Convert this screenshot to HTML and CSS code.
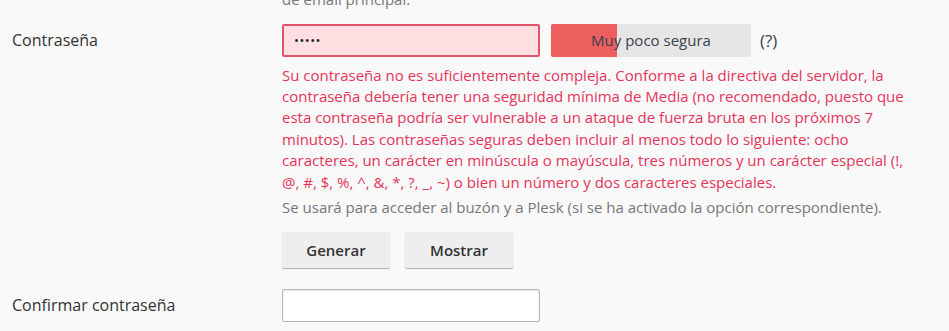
FILE: index.html
```html
<!DOCTYPE html>
<html lang="es">
<head>
<meta charset="utf-8">
<title>Contraseña</title>
<link rel="stylesheet" href="styles.css">
</head>
<body>
<div class="form">
  <div class="row top-row">
    <div class="label"></div>
    <div class="field">
      <div class="hint top-hint">de email principal.</div>
    </div>
  </div>
  <div class="row pwd-row">
    <div class="label">Contraseña</div>
    <div class="field">
      <div class="input-line">
        <div class="input error">•••••</div>
        <div class="strength">
          <div class="strength-fill"></div>
          <span class="strength-text">Muy poco segura</span>
        </div>
        <span class="help">(?)</span>
      </div>
      <div class="error-text">Su contraseña no es suficientemente compleja. Conforme a la directiva del servidor, la contraseña debería tener una seguridad mínima de Media (no recomendado, puesto que esta contraseña podría ser vulnerable a un ataque de fuerza bruta en los próximos 7 minutos). Las contraseñas seguras deben incluir al menos todo lo siguiente: ocho caracteres, un carácter en minúscula o mayúscula, tres números y un carácter especial (!, @, #, $, %, ^, &amp;, *, ?, _, ~) o bien un número y dos caracteres especiales.</div>
      <div class="hint">Se usará para acceder al buzón y a Plesk (si se ha activado la opción correspondiente).</div>
      <div class="buttons">
        <button class="btn">Generar</button>
        <button class="btn">Mostrar</button>
      </div>
    </div>
  </div>
  <div class="row confirm-row">
    <div class="label">Confirmar contraseña</div>
    <div class="field">
      <div class="input"></div>
    </div>
  </div>
</div>
</body>
</html>
```
FILE: styles.css
```css
html, body {
  margin: 0;
  padding: 0;
  background: #f9f9f9;
  overflow: hidden;
}
body {
  font-family: "Open Sans", "DejaVu Sans", sans-serif;
  font-size: 15px;
  line-height: 21.4px;
  color: #333;
}
.form {
  padding-left: 12px;
}
.row {
  display: flex;
}
.label {
  width: 270px;
  flex: none;
  font-size: 16px;
  line-height: 33px;
  color: #333;
}
.field {
  width: 630px;
}
.top-row .label,
.top-hint {
  line-height: 18px;
}
.top-hint {
  margin-top: -10px;
}
.pwd-row {
  margin-top: 16px;
}
.input-line {
  display: flex;
  align-items: center;
}
.input {
  box-sizing: border-box;
  width: 258px;
  height: 33px;
  border: 1px solid #b5b5b5;
  border-radius: 2px;
  background: #fff;
  box-shadow: inset 0 1px 2px rgba(0,0,0,0.12);
}
.input.error {
  border: 2px solid #e0556a;
  background: #ffdfe1;
  padding-left: 10px;
  font-size: 13px;
  line-height: 29px;
  color: #222;
  letter-spacing: 0.5px;
  box-shadow: none;
}
.strength {
  position: relative;
  margin-left: 11px;
  width: 200px;
  height: 33px;
  background: #e6e6e6;
  border-radius: 2px;
  overflow: hidden;
  display: flex;
  align-items: center;
  justify-content: center;
}
.strength-fill {
  position: absolute;
  left: 0;
  top: 0;
  bottom: 0;
  width: 33%;
  background: #ec5f5f;
}
.strength-text {
  position: relative;
  font-size: 15px;
  color: #3c4150;
}
.help {
  margin-left: 9px;
  font-size: 17px;
  color: #3c4150;
}
.error-text {
  margin-top: 7.5px;
  color: #e5345a;
}
.hint {
  color: #777;
}
.error-text + .hint {
  margin-top: 3.6px;
}
.buttons {
  display: flex;
  gap: 15px;
  margin-top: 14px;
}
.btn {
  width: 108px;
  height: 36px;
  border: 0;
  border-radius: 2px;
  background: #eeeeee;
  box-shadow: 0 1px 1px rgba(0,0,0,0.3);
  font-family: "Open Sans", "DejaVu Sans", sans-serif;
  font-size: 15px;
  font-weight: 600;
  color: #333;
  padding: 0;
}
.confirm-row {
  margin-top: 21px;
}
```
